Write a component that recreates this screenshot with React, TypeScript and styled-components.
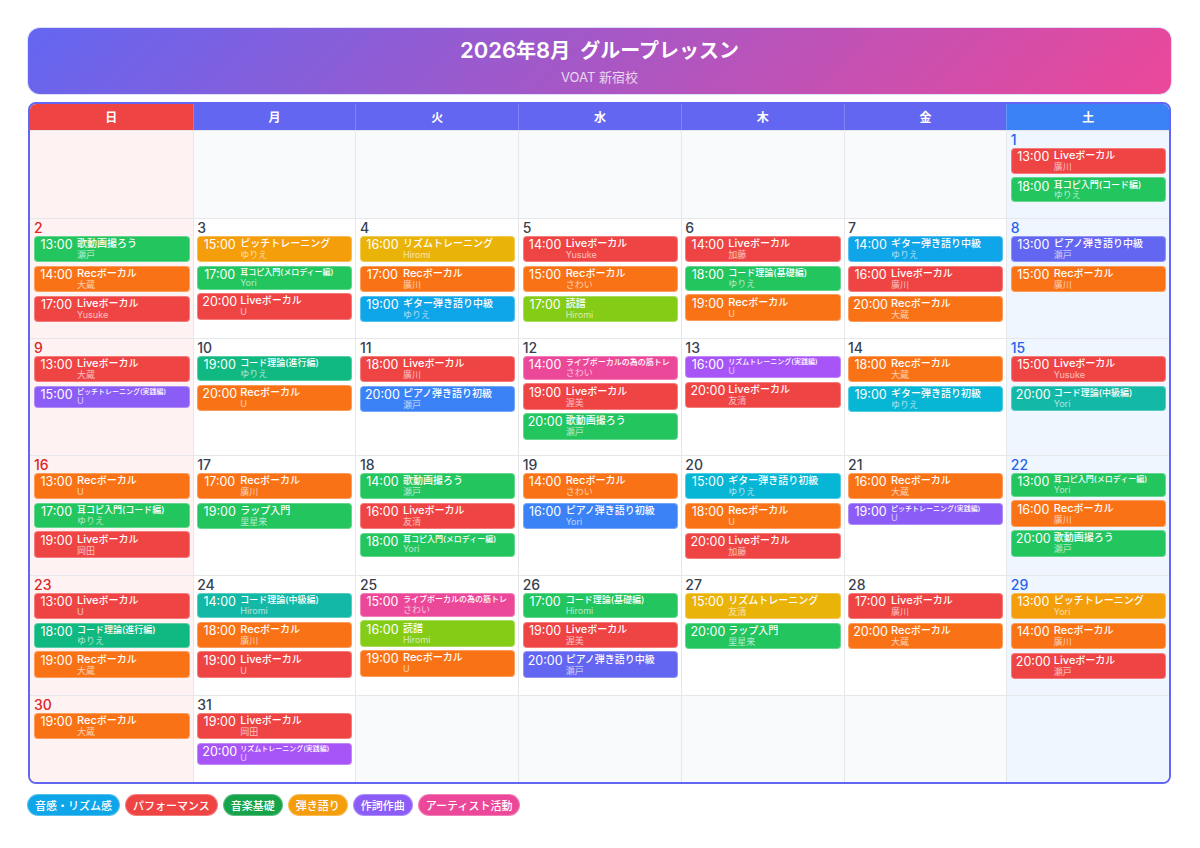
import styled, { createGlobalStyle } from 'styled-components'

const GlobalStyle = createGlobalStyle`
    html, body {
        margin: 0;
        padding: 0;
        background: #ffffff;
    }
    body {
        font-family: "Inter", "Noto Sans CJK JP", sans-serif;
    }
`;

const colors = {
    red: '#ef4444',
    orange: '#f97316',
    green: '#22c55e',
    amber: '#f59e0b',
    yellow: '#eab308',
    sky: '#0ea5e9',
    lime: '#84cc16',
    pink: '#ec4899',
    purple: '#a855f7',
    violet: '#8b5cf6',
    blue: '#3b82f6',
    indigo: '#6366f1',
    teal: '#14b8a6',
    emerald: '#10b981',
    cyan: '#06b6d4',
};

type ColorName = keyof typeof colors;
type TitleSize = 'normal' | 'small' | 'compact' | 'tiny';

type Lesson = {
    time: string
    title: string
    prefix?: string
    teacher: string
    color: ColorName
    size?: TitleSize
};

const live = (time: string, teacher: string): Lesson => ({ time, prefix: 'Live', title: 'ボーカル', teacher, color: 'red' });
const rec = (time: string, teacher: string): Lesson => ({ time, prefix: 'Rec', title: 'ボーカル', teacher, color: 'orange' });
const lesson = (time: string, title: string, teacher: string, color: ColorName, size?: TitleSize): Lesson => ({ time, title, teacher, color, size });

const days: Record<number, Lesson[]> = {
    1: [live('13:00', '廣川'), lesson('18:00', '耳コピ入門(コード編)', 'ゆりえ', 'green', 'small')],
    2: [lesson('13:00', '歌動画撮ろう', '瀬戸', 'green'), rec('14:00', '大蔵'), live('17:00', 'Yusuke')],
    3: [lesson('15:00', 'ピッチトレーニング', 'ゆりえ', 'amber'), lesson('17:00', '耳コピ入門(メロディー編)', 'Yori', 'green', 'compact'), live('20:00', 'U')],
    4: [lesson('16:00', 'リズムトレーニング', 'Hiromi', 'yellow'), rec('17:00', '廣川'), lesson('19:00', 'ギター弾き語り中級', 'ゆりえ', 'sky')],
    5: [live('14:00', 'Yusuke'), rec('15:00', 'さわい'), lesson('17:00', '読譜', 'Hiromi', 'lime')],
    6: [live('14:00', '加藤'), lesson('18:00', 'コード理論(基礎編)', 'ゆりえ', 'green', 'small'), rec('19:00', 'U')],
    7: [lesson('14:00', 'ギター弾き語り中級', 'ゆりえ', 'sky'), live('16:00', '廣川'), rec('20:00', '大蔵')],
    8: [lesson('13:00', 'ピアノ弾き語り中級', '瀬戸', 'indigo'), rec('15:00', '廣川')],
    9: [live('13:00', '大蔵'), lesson('15:00', 'ピッチトレーニング(実践編)', 'U', 'violet', 'tiny')],
    10: [lesson('19:00', 'コード理論(進行編)', 'ゆりえ', 'emerald', 'small'), rec('20:00', 'U')],
    11: [live('18:00', '廣川'), lesson('20:00', 'ピアノ弾き語り初級', '瀬戸', 'blue')],
    12: [lesson('14:00', 'ライブボーカルの為の筋トレ', 'さわい', 'pink', 'compact'), live('19:00', '渥美'), lesson('20:00', '歌動画撮ろう', '瀬戸', 'green')],
    13: [lesson('16:00', 'リズムトレーニング(実践編)', 'U', 'purple', 'tiny'), live('20:00', '友清')],
    14: [rec('18:00', '大蔵'), lesson('19:00', 'ギター弾き語り初級', 'ゆりえ', 'cyan')],
    15: [live('15:00', 'Yusuke'), lesson('20:00', 'コード理論(中級編)', 'Yori', 'teal', 'small')],
    16: [rec('13:00', 'U'), lesson('17:00', '耳コピ入門(コード編)', 'ゆりえ', 'green', 'small'), live('19:00', '岡田')],
    17: [rec('17:00', '廣川'), lesson('19:00', 'ラップ入門', '里星来', 'green')],
    18: [lesson('14:00', '歌動画撮ろう', '瀬戸', 'green'), live('16:00', '友清'), lesson('18:00', '耳コピ入門(メロディー編)', 'Yori', 'green', 'compact')],
    19: [rec('14:00', 'さわい'), lesson('16:00', 'ピアノ弾き語り初級', 'Yori', 'blue')],
    20: [lesson('15:00', 'ギター弾き語り初級', 'ゆりえ', 'cyan'), rec('18:00', 'U'), live('20:00', '加藤')],
    21: [rec('16:00', '大蔵'), lesson('19:00', 'ピッチトレーニング(実践編)', 'U', 'violet', 'tiny')],
    22: [lesson('13:00', '耳コピ入門(メロディー編)', 'Yori', 'green', 'compact'), rec('16:00', '廣川'), lesson('20:00', '歌動画撮ろう', '瀬戸', 'green')],
    23: [live('13:00', 'U'), lesson('18:00', 'コード理論(進行編)', 'ゆりえ', 'emerald', 'small'), rec('19:00', '大蔵')],
    24: [lesson('14:00', 'コード理論(中級編)', 'Hiromi', 'teal', 'small'), rec('18:00', '廣川'), live('19:00', 'U')],
    25: [lesson('15:00', 'ライブボーカルの為の筋トレ', 'さわい', 'pink', 'compact'), lesson('16:00', '読譜', 'Hiromi', 'lime'), rec('19:00', 'U')],
    26: [lesson('17:00', 'コード理論(基礎編)', 'Hiromi', 'green', 'small'), live('19:00', '渥美'), lesson('20:00', 'ピアノ弾き語り中級', '瀬戸', 'indigo')],
    27: [lesson('15:00', 'リズムトレーニング', '友清', 'yellow'), lesson('20:00', 'ラップ入門', '里星来', 'green')],
    28: [live('17:00', '廣川'), rec('20:00', '大蔵')],
    29: [lesson('13:00', 'ピッチトレーニング', 'Yori', 'amber'), rec('14:00', '廣川'), live('20:00', '瀬戸')],
    30: [rec('19:00', '大蔵')],
    31: [live('19:00', '岡田'), lesson('20:00', 'リズムトレーニング(実践編)', 'U', 'purple', 'tiny')],
};

const weekdays = ['日', '月', '火', '水', '木', '金', '土'];

const legend: { label: string, color: string }[] = [
    { label: '音感・リズム感', color: '#0ea5e9' },
    { label: 'パフォーマンス', color: '#ef4444' },
    { label: '音楽基礎', color: '#16a34a' },
    { label: '弾き語り', color: '#f59e0b' },
    { label: '作詞作曲', color: '#8b5cf6' },
    { label: 'アーティスト活動', color: '#ec4899' },
];

const Page = styled.div`
    width: 1200px;
    height: 848px;
    box-sizing: border-box;
    padding: 27px 28px 0 27px;
    display: flex;
    flex-direction: column;
    overflow: hidden;
`;

const Banner = styled.header`
    height: 68px;
    box-sizing: border-box;
    margin-bottom: 7px;
    padding-top: 9px;
    border-radius: 13px;
    border: 1px solid rgba(99, 102, 241, 0.2);
    background: linear-gradient(135deg, #6366f1, #ec4899);
    background-clip: padding-box;
    color: #ffffff;
    text-align: center;
`;

const BannerTitle = styled.h1`
    margin: 0;
    font-size: 20px;
    line-height: 28px;
    font-weight: 600;
    word-spacing: 5px;
`;

const BannerNumber = styled.span`
    font-size: 22px;
    line-height: 1;
`;

const BannerSubtitle = styled.p`
    margin: 4px 0 0;
    font-size: 13px;
    line-height: 16px;
    font-weight: 400;
    opacity: 0.75;
`;

const Calendar = styled.div`
    height: 682px;
    margin: 0 1px;
    box-sizing: border-box;
    border: 2px solid #6366f1;
    border-radius: 8px;
    overflow: hidden;
    display: grid;
    grid-template-columns: repeat(7, 1fr);
    grid-template-rows: 25.5px 88.5px 120px 117px 120px 120px 87px;
    background: #ffffff;
`;

const WeekdayCell = styled.div<{ $index: number }>`
    display: flex;
    align-items: center;
    justify-content: center;
    font-size: 12px;
    font-weight: 600;
    color: #ffffff;
    background: ${p => p.$index === 0 ? '#ef4444' : p.$index === 6 ? '#3b82f6' : '#6366f1'};
    border-left: ${p => p.$index === 0 ? 'none' : '1px solid rgba(255, 255, 255, 0.2)'};
`;

const cellBackground = (index: number, empty: boolean) => {
    if (index === 0) return '#fef2f2';
    if (index === 6) return '#eff6ff';
    return empty ? '#f9fafb' : '#ffffff';
};

const DayCell = styled.div<{ $index: number, $empty: boolean }>`
    min-width: 0;
    box-sizing: border-box;
    padding: 1px 3px 0 ${p => p.$index === 0 ? '4px' : '3.5px'};
    background: ${p => cellBackground(p.$index, p.$empty)};
    border-top: 1px solid #e5e7eb;
    border-left: ${p => p.$index === 0 ? 'none' : '1px solid #e5e7eb'};
    display: flex;
    flex-direction: column;
`;

const DayNumber = styled.div<{ $index: number }>`
    font-size: 14px;
    line-height: 15px;
    font-weight: 500;
    margin-bottom: 1px;
    color: ${p => p.$index === 0 ? '#dc2626' : p.$index === 6 ? '#2563eb' : '#374151'};
`;

const EventList = styled.div`
    display: flex;
    flex-direction: column;
    gap: 3.5px;
`;

const EventCard = styled.div<{ $color: ColorName }>`
    display: flex;
    align-items: flex-start;
    gap: 4px;
    box-sizing: border-box;
    padding: 0.3px 5px;
    border-radius: 4px;
    border: 1px solid rgba(255, 255, 255, 0.3);
    background: ${p => colors[p.$color]};
    color: #ffffff;
`;

const EventTime = styled.span`
    flex: none;
    width: 33px;
    display: flex;
    justify-content: center;
    font-size: 12.5px;
    line-height: 16px;
    font-weight: 400;
    white-space: nowrap;
`;

const EventBody = styled.div`
    min-width: 0;
    display: flex;
    flex-direction: column;
`;

const titleSizes: Record<TitleSize, string> = {
    normal: '10px',
    small: '9px',
    compact: '8px',
    tiny: '7px',
};

const EventTitle = styled.span<{ $size: TitleSize }>`
    font-size: ${p => titleSizes[p.$size]};
    line-height: 1.3;
    font-weight: 500;
    white-space: nowrap;
`;

const TitlePrefix = styled.span`
    font-size: 11px;
    line-height: 1;
`;

const EventTeacher = styled.span`
    font-size: 9px;
    line-height: 1.2;
    opacity: 0.65;
    white-space: nowrap;
`;

const Legend = styled.div`
    display: flex;
    gap: 5px;
    margin-top: 10px;
`;

const LegendPill = styled.div<{ $color: string }>`
    height: 22px;
    box-sizing: border-box;
    display: flex;
    align-items: center;
    padding: 0 7px;
    border-radius: 11px;
    border: 1px solid rgba(255, 255, 255, 0.3);
    background: ${p => p.$color};
    color: #ffffff;
    font-size: 11px;
    font-weight: 500;
`;

const startOffset = 6;
const cellCount = 42;

export default function App() {
    const cells = Array.from({ length: cellCount }, (_, i) => {
        const day = i - startOffset + 1;
        return day >= 1 && day <= 31 ? day : null;
    });

    return (
        <>
            <GlobalStyle />
            <Page>
                <Banner>
                    <BannerTitle>
                        <BannerNumber>2026</BannerNumber>年<BannerNumber>8</BannerNumber>月 グループレッスン
                    </BannerTitle>
                    <BannerSubtitle>VOAT 新宿校</BannerSubtitle>
                </Banner>
                <Calendar>
                    {weekdays.map((name, i) => (
                        <WeekdayCell key={name} $index={i}>{name}</WeekdayCell>
                    ))}
                    {cells.map((day, i) => (
                        <DayCell key={i} $index={i % 7} $empty={day === null}>
                            {day !== null &&
                                <>
                                    <DayNumber $index={i % 7}>{day}</DayNumber>
                                    <EventList>
                                        {(days[day] ?? []).map(item => (
                                            <EventCard key={item.time} $color={item.color}>
                                                <EventTime>{item.time}</EventTime>
                                                <EventBody>
                                                    <EventTitle $size={item.size ?? 'normal'}>
                                                        {item.prefix && <TitlePrefix>{item.prefix}</TitlePrefix>}
                                                        {item.title}
                                                    </EventTitle>
                                                    <EventTeacher>{item.teacher}</EventTeacher>
                                                </EventBody>
                                            </EventCard>
                                        ))}
                                    </EventList>
                                </>
                            }
                        </DayCell>
                    ))}
                </Calendar>
                <Legend>
                    {legend.map(item => (
                        <LegendPill key={item.label} $color={item.color}>{item.label}</LegendPill>
                    ))}
                </Legend>
            </Page>
        </>
    )
}
